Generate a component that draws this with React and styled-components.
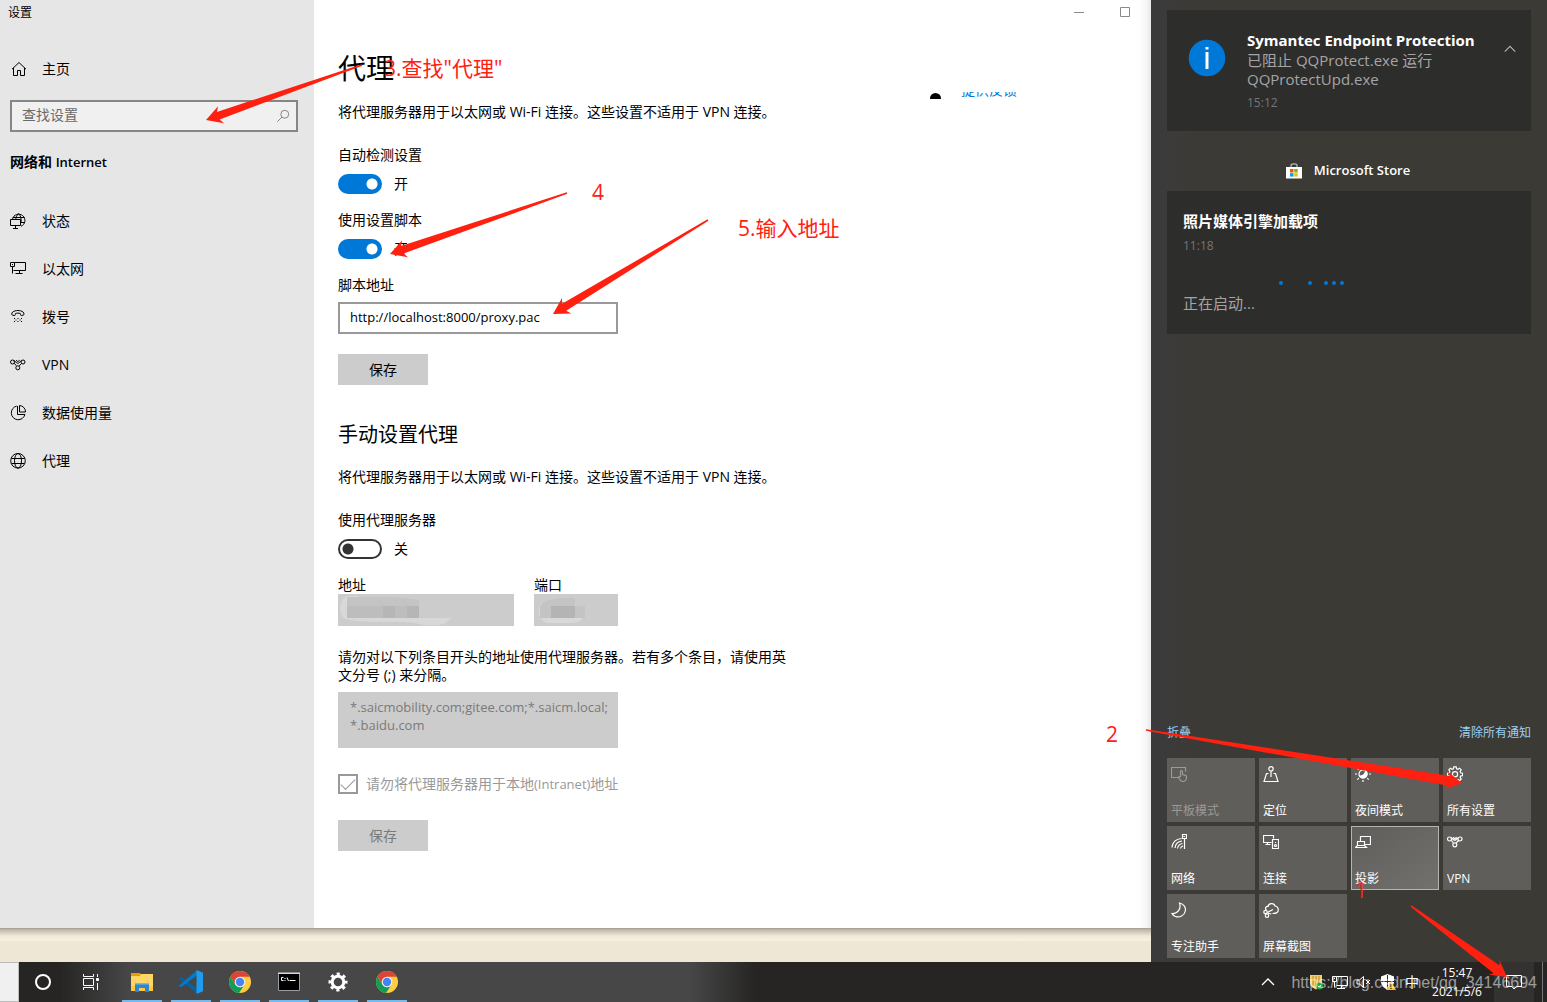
import React from 'react';
import styled, { createGlobalStyle, css } from 'styled-components';

const RED = '#ff2010';

const GlobalStyle = createGlobalStyle`
  *, *::before, *::after { box-sizing: border-box; }
  body {
    margin: 0;
    background: #eee7d5;
    color: #000;
    font-family: "Open Sans", "Noto Sans CJK SC", sans-serif;
    font-size: 14px;
    line-height: 20px;
  }
  h1, h2, h3, p { margin: 0; padding: 0; font-weight: 400; }
  button, input, textarea { font: inherit; color: inherit; margin: 0; border-radius: 0; }
  button { border: 0; padding: 0; background: none; text-align: inherit; }
  a { color: inherit; text-decoration: none; }
  svg { display: block; flex: none; }
`;

/* ---------- Icons ---------- */

const Line = styled.svg.attrs({ viewBox: '0 0 16 16' })`
  width: ${(p) => p.$size || 16}px;
  height: ${(p) => p.$size || 16}px;
  fill: none;
  stroke: currentColor;
  stroke-width: ${(p) => p.$weight || 1};
`;

const drawings = {
  home: (
    <path d="M1 8.200 8 1.500l7 6.700M2.500 7v7.500h4V9.500h3v5h4V7" />
  ),
  status: (
    <>
      <path d="M2.500 6A6.300 6.300 0 1 1 11 13.300M3 4.500h11.500M11 9.500h4M8.700.7C6.700 2 5.900 4 5.800 6.500M8.700.7c2.300 2.500 2.800 5.500 2.300 9" />
      <path d="M.5 6.500h10v6H.5zM5.500 12.500v3M3 15.500h5" />
    </>
  ),
  ethernet: (
    <path d="M4.500 1.500h11v8H3.500M.5 1.500h4v4h-4zM2.500 5.500v7M9.500 9.500v3M5.500 12.500h7M2 3.500h1" />
  ),
  dial: (
    <>
      <path d="M2.500 6.200c-1-.2-1.200-2 .2-3.200C5.500 1 10.500 1 13 3c1.400 1.200 1.200 3 .2 3.200l-2 .3c-.8 0-.7-1.700-.9-2C8.800 4 7 4 5.500 4.500c-.2.4 0 2-.9 2z" />
      <path d="M4 9.500h1M7.500 9.500h1M11 9.500h1M4 12.500h1M7.500 12.500h1M11 12.500h1M5.500 11h1M9.500 11h1" />
    </>
  ),
  vpn: (
    <>
      <circle cx="2.500" cy="5" r="2" />
      <circle cx="13" cy="5" r="2" />
      <circle cx="7.800" cy="10.800" r="2" />
      <path d="M4 3.500l2.300 2c1.200 1 2 1 3 0L11.500 3.500M4.300 6.300l2 2.400M11.500 6.500 9.200 8.900M6 3.200l1.800 1.500 1.900-1.500" />
    </>
  ),
  data: (
    <path d="M6.700 1.100A6.900 6.900 0 1 0 14.900 9.500H7.500V1M9.500.5v6.500h6A6.300 6.300 0 0 0 9.500.5z" />
  ),
  globe: (
    <>
      <circle cx="8" cy="7.800" r="7.300" />
      <ellipse cx="8" cy="7.800" rx="3.500" ry="7.300" />
      <path d="M1.500 5.500h13M1.500 10.500h13" />
    </>
  ),
  search: (
    <>
      <circle cx="10" cy="6" r="4.500" />
      <path d="M6.800 9.200 1.500 14.500" />
    </>
  ),
  tablet: (
    <>
      <path d="M7 11.500H.5v-10h14v4" />
      <path d="M9.500 10.500v-5c0-1.300 2-1.300 2 0v3l3 .8c1 .3 1 1 1 1.700 0 3-1 4.500-3.500 4.500-2 0-3.300-1.500-4.500-4 0-1 1.300-1.200 2-.3" />
    </>
  ),
  location: (
    <>
      <circle cx="8" cy="2.800" r="2.200" />
      <path d="M8 5v6M5.500 7.500h-2l-2.500 8h14l-2.500-8h-2" />
    </>
  ),
  night: (
    <>
      <circle cx="8" cy="8" r="4" />
      <path fill="currentColor" d="M10.500 4.800A4 4 0 1 1 4.600 10C8 10.500 10.500 8 10.500 4.800z" />
      <path d="M8 0v2M8 14v2M0 8h2M14 8h2M2.300 2.300l1.500 1.500M12.200 12.200l1.500 1.500M2.300 13.700l1.500-1.500M12.200 3.800l1.500-1.500" />
    </>
  ),
  gear: (
    <>
      <path d="M6.800.8h2.400l.4 2 1.300.5 1.700-1.100 1.600 1.600-1.100 1.700.5 1.300 2 .4v2.400l-2 .4-.5 1.200 1.100 1.700-1.600 1.700-1.700-1.100-1.300.5-.4 2H6.800l-.4-2-1.300-.5-1.700 1.100-1.600-1.700 1.100-1.700L2.400 10l-2-.4V7.200l2-.4.5-1.300-1.100-1.700 1.600-1.600 1.700 1.100 1.300-.5z" />
      <circle cx="8" cy="8.300" r="2.600" />
    </>
  ),
  network: (
    <>
      <path d="M11.500.5h4v4h-4zM13.500 4.500V15M12.500 2.500h2" />
      <path d="M1 13.500C1.500 8.500 5 5 10.500 4.500M4 14c.4-4 3-6.500 7-7M6.500 14.500c.4-3 2-4.500 5-5M9.500 14.500c.2-1.300 1-2.200 2.500-2.500" />
    </>
  ),
  connect: (
    <>
      <path d="M8.500 8.500h-8v-7h10v3M4.500 8.500v2M2.500 10.500h5" />
      <path d="M9.500 5.500h6v9h-6zM12 8.500h1" />
      <circle cx="12.500" cy="11.500" r="1" />
    </>
  ),
  project: (
    <path d="M5.500 7.500v-5h10v8H10M2.500 7.500h7v4h-7zM2.500 11.500l-2 2h11l-2-2" />
  ),
  moon: (
    <path d="M8.500 1C13 2 15 5.500 14.300 9 13.500 13.500 8.500 16 4.500 14.500 3 14 1.500 12.700 1 11.500 6.500 12 10.500 7 8.500 1z" />
  ),
  snip: (
    <>
      <path d="M3.500 8C1.500 6.500 3 4 5 4.500 5.500 1 11 .5 12 4c3 0 4.500 4.500 2 6.500-1 1-3 1-4.500 1M4.300 10.500 10 7.500M4.300 11l4 1" />
      <circle cx="2.500" cy="10" r="1.700" />
      <circle cx="4" cy="13.700" r="1.700" />
    </>
  ),
  taskview: (
    <>
      <path d="M.5 0v2.500h10V0M.5 16v-2.500h10V16M.5 4.500h10v7H.5zM14.500 0v3M14.500 9v7" />
      <path fill="currentColor" d="M13.500 4.500h2v2h-2z" />
    </>
  ),
  chevron: <path d="M2 11l6-6 6 6" />,
  monitor: (
    <path d="M4.500 2.500h11v9h-11M.5 2.500h4v5h-4zM2.500 7.500v6M9.500 11.500v3M5 14.500h8M2 4.500h1" />
  ),
  mute: <path d="M1 6h2.500L7.500 2.500v11L3.500 10H1zM10 6l4 4M14 6l-4 4" />,
  message: <path d="M.5 1.500h15v11h-5l-2.500 2.500-2-2.500H.5z" />,
};

const Icon = ({ name, size, weight }) => (
  <Line $size={size} $weight={weight} aria-hidden="true">{drawings[name]}</Line>
);

const Art = styled.svg`
  width: ${(p) => p.$size || 24}px;
  height: ${(p) => p.$size || 24}px;
`;

const FolderArt = () => (
  <Art viewBox="0 0 24 24">
    <path fill="#ffd665" d="M1 4h22v17H1z" />
    <path fill="#e5a000" d="M1 3h9l1 1.500L9.500 6H1z" />
    <path fill="#ffc83d" d="M1 16h22v5H1z" />
    <path fill="#2f86cf" d="M5 13h14v9h-4v-4H9v4H5z" />
    <path fill="#6fb9ee" d="M5 13h14v1.500H5z" />
  </Art>
);

const CodeArt = () => (
  <Art viewBox="0 0 24 24">
    <path fill="#0065a9" d="M0 8.500 2 6.800l16 12v4.700z" />
    <path fill="#007acc" d="M0 15.500l2 1.700L18 5.500V.5z" />
    <path fill="#1f9cf0" d="M17.500 0 24 2.800v18.400L17.500 24z" />
  </Art>
);

const ChromeArt = () => (
  <Art viewBox="0 0 24 24">
    <circle cx="12" cy="12" r="11" fill="#ffcd40" />
    <path fill="#db4437" d="M2.500 6.500A11 11 0 0 1 21.600 6.700H12L7.300 14.700z" />
    <path fill="#0f9d58" d="M2.500 6.500 7.400 14.700 12 17.300l3.500-1L11 23A11 11 0 0 1 2.500 6.500z" />
    <circle cx="12" cy="12" r="5.300" fill="#f1f1f1" />
    <circle cx="12" cy="12" r="4.200" fill="#4285f4" />
  </Art>
);

const TerminalArt = () => (
  <Art viewBox="0 0 24 24">
    <path fill="#000" stroke="#9a9fa5" d="M1.500 3.500h21v17h-21z" />
    <path fill="#d6dade" d="M1 2.500h22V4H1z" />
    <path stroke="#fff" fill="none" d="M6.500 7.500H4.500v3h2M8 8v1M8 10v1M10 7.500l1.500 3.500M12.500 10.500h6" />
  </Art>
);

const GearArt = () => (
  <Art viewBox="0 0 24 24">
    <circle cx="12" cy="12" r="5.800" fill="none" stroke="#fff" strokeWidth="3" />
    <circle cx="12" cy="12" r="8" fill="none" stroke="#fff" strokeWidth="3" strokeDasharray="3.140 3.140" strokeDashoffset="1.570" />
  </Art>
);

const StoreArt = () => (
  <Art viewBox="0 0 16 16" $size={16}>
    <path fill="none" stroke="#bbb" strokeWidth="1.200" d="M5 4V2.500C5 .3 11 .3 11 2.500V4" />
    <path fill="#fff" d="M0 4h16v11.500H0z" />
    <path fill="#f25022" d="M4 6h3.500v3.500H4z" />
    <path fill="#7fba00" d="M8.200 6h3.500v3.500H8.200z" />
    <path fill="#00a4ef" d="M4 10.100h3.500v3.500H4z" />
    <path fill="#ffb900" d="M8.200 10.100h3.500v3.500H8.200z" />
  </Art>
);

const ShieldArt = () => (
  <Art viewBox="0 0 16 16" $size={16}>
    <path fill="#f3cf6c" d="M2 1h12v8c0 3-3 5-6 6.500C5 14 2 12 2 9z" />
    <path stroke="#b7852a" fill="none" d="M5 2v9M8 2v11M11 2v8" />
    <circle cx="11.500" cy="12" r="3.500" fill="#1ea838" />
    <path stroke="#fff" fill="none" d="M10 12l1.200 1.200 2-2.400" />
  </Art>
);

const DefenderArt = () => (
  <Art viewBox="0 0 16 16" $size={16}>
    <path fill="#fff" d="M7.500 0 14 2.500v5c0 4-3.500 6.500-6.500 8C4 14 1 11.500 1 7.500v-5z" />
    <path stroke="#262524" fill="none" d="M7.500 1v14M1 7.500h13" />
    <path fill="#fbc02d" d="M11 7l5 9H6z" />
    <path stroke="#000" fill="none" d="M11 10v3M11 14v1" />
  </Art>
);

/* ---------- Shell ---------- */

const Desktop = styled.div`
  position: relative;
  display: grid;
  grid-template-rows: 1fr 40px;
  min-height: 100vh;
`;

const Workspace = styled.div`
  display: grid;
  grid-template-columns: minmax(0, 1fr) 396px;
`;

const DesktopArea = styled.div`
  display: flex;
  flex-direction: column;
  padding-bottom: 34px;
  background: linear-gradient(to top, #eee7d5 21px, #faf2e0 21px, #f1e9d7 26px, #b9b2a3 33px, #96938b 34px);
`;

const Window = styled.div`
  flex: 1;
  display: grid;
  grid-template-columns: 314px minmax(0, 1fr);
  background: #fff;
`;

const Sidebar = styled.aside`
  background: #e6e6e6;
`;

const WindowTitle = styled.div`
  height: 24px;
  padding: 3px 8px 0;
  font-size: 12px;
  line-height: 20px;
`;

const NavLink = styled.a`
  display: flex;
  align-items: center;
  gap: ${(p) => (p.$home ? 15 : 16)}px;
  height: 48px;
  padding-left: ${(p) => (p.$home ? 11 : 10)}px;
  ${(p) => p.$home && css`margin-top: 21px;`}
`;

const SearchBox = styled.div`
  display: flex;
  align-items: center;
  height: 32px;
  margin: 7px 16px 20px 10px;
  padding: 0 6px 0 10px;
  border: 2px solid #868686;
  background: #f0f0f0;
  color: #767676;
`;

const SearchInput = styled.input`
  flex: 1;
  min-width: 0;
  padding: 0 0 2px;
  border: 0;
  background: none;
  outline: 0;
  &::placeholder { color: #6a6a6a; opacity: 1; }
`;

const Category = styled.h2`
  padding: 0 10px;
  margin-bottom: 25px;
  font-size: 14px;
  font-weight: 600;
  line-height: 20px;
`;

const Pane = styled.main`
  background: linear-gradient(to left, #e9e9e9, #f6f6f6 5px, #fdfdfd 11px, #fff 14px);
`;

const Caption = styled.div`
  display: flex;
  justify-content: flex-end;
  height: 24px;
  padding-right: 3px;
  color: #8a8a8a;
`;

const CaptionButton = styled.button`
  display: grid;
  place-items: center;
  width: 46px;
`;

const CaptionGlyph = styled.svg`
  width: 10px;
  height: 10px;
  fill: none;
  stroke: currentColor;
`;

const Columns = styled.div`
  display: flex;
  gap: 142px;
  padding: 24px;
`;

const Settings = styled.div`
  width: 450px;
`;

const PageTitle = styled.h1`
  margin-bottom: 14px;
  font-size: 28px;
  line-height: 40px;
`;

const Section = styled.h2`
  margin: 36px 0 18px;
  font-size: 20px;
  line-height: 28px;
`;

const Note = styled.p`
  line-height: 20px;
`;

const LabelNote = styled.label`
  display: block;
  line-height: 18px;
`;

const Small = styled.span`
  font-size: 13px;
`;

const Field = styled.div`
  display: flex;
  flex-direction: column;
  gap: ${(p) => p.$gap}px;
  margin-top: ${(p) => p.$top || 0}px;
`;

const FieldLabel = styled.label`
  line-height: ${(p) => p.$line || 20}px;
`;

const ToggleRow = styled.label`
  display: flex;
  align-items: center;
  gap: 12px;
`;

const Switch = styled.input`
  appearance: none;
  width: 44px;
  height: 20px;
  border: 2px solid #333;
  border-radius: 10px;
  background: radial-gradient(circle at 8px 8px, #333 5px, transparent 6px);
  &:checked {
    border-color: #0078d7;
    background: radial-gradient(circle at 32px 8px, #fff 5px, #0078d7 6px);
  }
`;

const TextInput = styled.input`
  width: 280px;
  height: 32px;
  padding: 0 10px 2px;
  border: 2px solid #999;
  background: #fff;
  font-size: 13px;
`;

const SaveButton = styled.button`
  display: block;
  width: 90px;
  height: 31px;
  margin-top: ${(p) => p.$top}px;
  background: #ccc;
  text-align: center;
  &:disabled { color: #7a7a7a; }
`;

const AddressRow = styled.div`
  display: flex;
  gap: 20px;
  margin: 17px 0 22px;
`;

const Masked = styled.div`
  position: relative;
  width: ${(p) => p.$width}px;
  height: 32px;
  background: #ccc;
`;

const MaskedInput = styled.input`
  width: 100%;
  height: 100%;
  padding: 0 10px;
  border: 0;
  background: none;
`;

const Smudge = styled.svg`
  position: absolute;
  inset: 0;
  width: 100%;
  height: 100%;
`;

const Bypass = styled.textarea`
  display: block;
  width: 280px;
  height: 56px;
  margin: 8px 0 26px;
  padding: 6px 8px 6px 12px;
  border: 0;
  background: #ccc;
  color: #7a7a7a;
  font-size: 13px;
  line-height: 18px;
  resize: none;
  overflow: hidden;
`;

const CheckRow = styled.label`
  display: flex;
  align-items: center;
  gap: 8px;
  height: 20px;
  color: #999;
`;

const Check = styled.input`
  appearance: none;
  display: grid;
  width: 20px;
  height: 20px;
  border: 2px solid #999;
  &::before {
    content: "";
    width: 14px;
    height: 7px;
    margin: 3px 1px;
    border: solid #999;
    border-width: 0 0 1px 1px;
    transform: rotate(-45deg);
  }
`;

const Feedback = styled.div`
  display: flex;
  gap: 20px;
  margin-top: 44px;
  height: 7px;
  overflow: hidden;
  color: #0078d7;
`;

const FeedbackBullet = styled.span`
  width: 11px;
  height: 11px;
  margin-top: 1px;
  border-radius: 50%;
  background: #000;
`;

const FeedbackClip = styled.a`
  display: flex;
  align-items: flex-end;
  height: 5px;
  overflow: hidden;
  line-height: 14px;
`;

/* ---------- Action centre ---------- */

const ActionCenter = styled.aside`
  display: flex;
  flex-direction: column;
  padding: 10px 16px 4px;
  background: linear-gradient(to right, #3b3b3c, #3b3a36 50px, #3b3a35);
  color: #fff;
`;

const Card = styled.article`
  display: flex;
  gap: 21px;
  background: #2d2d2c;
  padding: ${(p) => (p.$stacked ? '20px 16px 21px' : '20px 14px 19px 21px')};
  ${(p) => p.$stacked && css`
    flex-direction: column;
    gap: 0;
  `}
`;

const InfoBadge = styled.svg`
  width: 38px;
  height: 38px;
  margin-top: 9px;
`;

const CardBody = styled.div`
  flex: 1;
  min-width: 0;
`;

const CardTitle = styled.h3`
  font-size: 15px;
  font-weight: 700;
  line-height: 21px;
  white-space: nowrap;
`;

const CardText = styled.p`
  color: #a5a5a5;
  font-size: 15px;
  line-height: 19px;
`;

const CardTime = styled.time`
  display: block;
  margin-top: 4px;
  color: #767676;
  font-size: 12px;
  line-height: 19px;
`;

const Collapse = styled.button`
  align-self: flex-start;
  margin-top: 12px;
  color: #b4b4b4;
`;

const GroupTitle = styled.h3`
  display: flex;
  align-items: center;
  justify-content: center;
  gap: 12px;
  padding: 29px 2px 10px 0;
  font-size: 13px;
  font-weight: 600;
  line-height: 21px;
`;

const Progress = styled.svg`
  width: 100%;
  height: 4px;
  margin: 26px 0 9px;
  fill: #0078d7;
`;

const PanelLinks = styled.div`
  display: flex;
  justify-content: space-between;
  margin: auto 0 15px;
  color: #9cd1f7;
  font-size: 12px;
`;

const Tiles = styled.div`
  display: grid;
  grid-template-columns: repeat(4, 1fr);
  grid-auto-rows: 64px;
  gap: 4px;
`;

const Tile = styled.button`
  display: flex;
  flex-direction: column;
  justify-content: space-between;
  padding: 8px 4px 1px;
  background: #5f5e5b;
  color: #fff;
  font-size: 12px;
  line-height: 20px;
  &:disabled { color: #9b9a98; }
  ${(p) => p.$active && css`
    background: linear-gradient(to bottom right, #5f5e5b, #72716d);
    box-shadow: inset 0 0 0 1px #b4b4b1;
  `}
`;

/* ---------- Taskbar ---------- */

const Taskbar = styled.footer`
  display: flex;
  justify-content: space-between;
  background: linear-gradient(to right, #262524 60px, #474747 130px, #474747 690px, #262524 755px);
  color: #fff;
`;

const TaskGroup = styled.div`
  display: flex;
`;

const SearchStub = styled.div`
  width: 19px;
  background: #f0f0f0;
  border: solid #bcbcbc;
  border-width: 1px 1px 1px 0;
`;

const TaskButton = styled.button`
  display: grid;
  place-items: center;
  width: 48px;
`;

const AppList = styled.div`
  display: flex;
  gap: 9px;
  margin-left: 7px;
`;

const AppButton = styled.button`
  display: grid;
  place-items: center;
  width: 40px;
  border-top: 2px solid transparent;
  border-bottom: 2px solid #76b9ed;
`;

const Ring = styled.span`
  width: 16px;
  height: 16px;
  border: 2px solid #fff;
  border-radius: 50%;
`;

const Tray = styled.div`
  display: flex;
  align-items: center;
  gap: 8px;
  padding-right: 4px;
`;

const TrayButton = styled.button`
  display: grid;
  place-items: center;
  width: 16px;
  ${(p) => p.$wide && css`
    width: 32px;
    margin-right: 16px;
  `}
`;

const Clock = styled.time`
  width: 58px;
  font-size: 12px;
  line-height: 19px;
  text-align: center;
`;

const Notifications = styled.button`
  display: grid;
  place-items: center;
  align-self: stretch;
  width: 40px;
  background: #333231;
`;

const PeekEdge = styled.span`
  align-self: stretch;
  width: 1px;
  background: #777;
`;

/* ---------- Annotations ---------- */

const Overlay = styled.div`
  position: absolute;
  inset: 0;
  overflow: hidden;
  pointer-events: none;
`;

const ArrowLayer = styled.svg`
  position: absolute;
  top: 0;
  left: 0;
  fill: ${RED};
`;

const Callout = styled.span`
  position: absolute;
  left: ${(p) => p.$x}px;
  top: ${(p) => p.$y}px;
  color: ${RED};
  font-size: 21px;
  line-height: 28px;
  white-space: nowrap;
`;

const Watermark = styled.span`
  position: absolute;
  right: 10px;
  bottom: 9px;
  color: rgba(255, 255, 255, 0.55);
  font-family: "Liberation Sans", sans-serif;
  font-size: 16px;
  line-height: 20px;
`;

/* Tapered arrow: thin at the tail, widening up to a barbed head. */
const Arrow = ({ from, to, neck = 4 }) => {
  const [x1, y1] = from;
  const [x2, y2] = to;
  const length = Math.hypot(x2 - x1, y2 - y1);
  const ux = (x2 - x1) / length;
  const uy = (y2 - y1) / length;
  const at = (back, side) => `${x2 - ux * back - uy * side},${y2 - uy * back + ux * side}`;
  const points = [
    at(length, 0.8), at(13, neck), at(16, 9), at(0, 0),
    at(16, -9), at(13, -neck), at(length, -0.8),
  ];
  return <polygon points={points.join(' ')} />;
};

const arrows = [
  { from: [362, 65], to: [206, 120] },
  { from: [567, 193], to: [390, 254] },
  { from: [708, 220], to: [553, 314] },
  { from: [1146, 730], to: [1462, 783], neck: 5 },
  { from: [1411, 906], to: [1507, 977], neck: 5 },
];

const navItems = [
  ['status', '状态'],
  ['ethernet', '以太网'],
  ['dial', '拨号'],
  ['vpn', 'VPN'],
  ['data', '数据使用量'],
  ['globe', '代理'],
];

const tiles = [
  ['tablet', '平板模式', 'off'],
  ['location', '定位'],
  ['night', '夜间模式'],
  ['gear', '所有设置'],
  ['network', '网络'],
  ['connect', '连接'],
  ['project', '投影', 'active'],
  ['vpn', 'VPN'],
  ['moon', '专注助手'],
  ['snip', '屏幕截图'],
];

const apps = [
  ['文件资源管理器', FolderArt],
  ['Visual Studio Code', CodeArt],
  ['Google Chrome', ChromeArt],
  ['命令提示符', TerminalArt],
  ['设置', GearArt],
  ['Google Chrome 2', ChromeArt],
];

const ProxyNote = () => (
  <Note>将代理服务器用于以太网或 Wi-Fi 连接。这些设置不适用于 VPN 连接。</Note>
);

const Toggle = ({ id, label, on, top }) => (
  <Field $gap={9} $top={top}>
    <FieldLabel htmlFor={id}>{label}</FieldLabel>
    <ToggleRow>
      <Switch id={id} type="checkbox" role="switch" defaultChecked={on} />
      {on ? '开' : '关'}
    </ToggleRow>
  </Field>
);

export default function App() {
  return (
    <Desktop>
      <GlobalStyle />
      <Workspace>
        <DesktopArea>
          <Window>
            <Sidebar>
              <WindowTitle>设置</WindowTitle>
              <NavLink href="#home" $home><Icon name="home" />主页</NavLink>
              <SearchBox>
                <SearchInput type="search" aria-label="查找设置" placeholder="查找设置" />
                <Icon name="search" size={14} />
              </SearchBox>
              <Category>网络和 <Small>Internet</Small></Category>
              <nav>
                {navItems.map(([icon, text]) => (
                  <NavLink key={icon} href={`#${icon}`}><Icon name={icon} />{text}</NavLink>
                ))}
              </nav>
            </Sidebar>
            <Pane>
              <Caption>
                <CaptionButton aria-label="最小化">
                  <CaptionGlyph viewBox="0 0 10 10"><path d="M0 5.500h10" /></CaptionGlyph>
                </CaptionButton>
                <CaptionButton aria-label="最大化">
                  <CaptionGlyph viewBox="0 0 10 10"><path d="M.5.5h9v9h-9z" /></CaptionGlyph>
                </CaptionButton>
              </Caption>
              <Columns>
                <Settings>
                  <PageTitle>代理</PageTitle>
                  <ProxyNote />
                  <Toggle id="auto" label="自动检测设置" on top={23} />
                  <Toggle id="script" label="使用设置脚本" on top={16} />
                  <Field $gap={7} $top={16}>
                    <FieldLabel htmlFor="pac">脚本地址</FieldLabel>
                    <TextInput id="pac" defaultValue="http://localhost:8000/proxy.pac" />
                  </Field>
                  <SaveButton $top={20}>保存</SaveButton>

                  <Section>手动设置代理</Section>
                  <ProxyNote />
                  <Toggle id="manual" label="使用代理服务器" top={23} />
                  <AddressRow>
                    <Field $gap={0}>
                      <FieldLabel htmlFor="address" $line={18}>地址</FieldLabel>
                      <Masked $width={176}>
                        <MaskedInput id="address" disabled />
                        <Smudge viewBox="0 0 176 32">
                          <path fill="#d8d8d8" d="M9 2C0 7 0 20 7 25c20 5 50 1 70 4 15 4 30 4 36-5H20V2z" />
                          <path fill="#c4c4c4" d="M9 3h45l27 3v18H9z" />
                          <path fill="#bdbdbd" d="M9 12h72v12H9z" />
                          <path fill="#b6b6b6" d="M45 12h12v12H45zM69 12h12v12H69z" />
                        </Smudge>
                      </Masked>
                    </Field>
                    <Field $gap={0}>
                      <FieldLabel htmlFor="port" $line={18}>端口</FieldLabel>
                      <Masked $width={84}>
                        <MaskedInput id="port" disabled />
                        <Smudge viewBox="0 0 84 32">
                          <path fill="#d8d8d8" d="M8 9C2 14 4 27 14 29h22c7 0 11-2 13-5H17z" />
                          <path fill="#c4c4c4" d="M6 12c5-6 14-8 24-8h11v8h10v12H6z" />
                          <path fill="#b4b4b4" d="M17 12h24v12H17z" />
                        </Smudge>
                      </Masked>
                    </Field>
                  </AddressRow>
                  <LabelNote htmlFor="bypass">
                    请勿对以下列条目开头的地址使用代理服务器。若有多个条目，请使用英文分号 (;) 来分隔。
                  </LabelNote>
                  <Bypass id="bypass" disabled defaultValue={'*.saicmobility.com;gitee.com;*.saicm.local;\n*.baidu.com'} />
                  <CheckRow>
                    <Check type="checkbox" defaultChecked disabled />
                    <span>请勿将代理服务器用于本地<Small>(Intranet)</Small>地址</span>
                  </CheckRow>
                  <SaveButton $top={26} disabled>保存</SaveButton>
                </Settings>
                <Feedback>
                  <FeedbackBullet />
                  <FeedbackClip href="#feedback">提供反馈</FeedbackClip>
                </Feedback>
              </Columns>
            </Pane>
          </Window>
        </DesktopArea>

        <ActionCenter>
          <Card>
            <InfoBadge viewBox="0 0 38 38">
              <circle cx="19" cy="19" r="18.300" fill="#0078d7" />
              <path fill="#fff" d="M17.500 13h3v17h-3zM17.500 8h3v2.500h-3z" />
            </InfoBadge>
            <CardBody>
              <CardTitle>Symantec Endpoint Protection</CardTitle>
              <CardText>已阻止 QQProtect.exe 运行 QQProtectUpd.exe</CardText>
              <CardTime>15:12</CardTime>
            </CardBody>
            <Collapse aria-label="收起"><Icon name="chevron" size={14} weight={1.25} /></Collapse>
          </Card>
          <GroupTitle><StoreArt />Microsoft Store</GroupTitle>
          <Card $stacked>
            <CardTitle>照片媒体引擎加载项</CardTitle>
            <CardTime>11:18</CardTime>
            <Progress viewBox="0 0 332 4">
              {[98, 127, 143, 151, 159].map((x) => <circle key={x} cx={x} cy="2" r="2" />)}
            </Progress>
            <CardText>正在启动...</CardText>
          </Card>
          <PanelLinks>
            <a href="#collapse">折叠</a>
            <a href="#clear">清除所有通知</a>
          </PanelLinks>
          <Tiles>
            {tiles.map(([icon, text, state]) => (
              <Tile key={icon} disabled={state === 'off'} $active={state === 'active'}>
                <Icon name={icon} weight={1.2} />
                {text}
              </Tile>
            ))}
          </Tiles>
        </ActionCenter>
      </Workspace>

      <Taskbar>
        <TaskGroup>
          <SearchStub />
          <TaskButton aria-label="Cortana"><Ring /></TaskButton>
          <TaskButton aria-label="任务视图"><Icon name="taskview" /></TaskButton>
          <AppList>
            {apps.map(([name, AppArt]) => (
              <AppButton key={name} aria-label={name}><AppArt /></AppButton>
            ))}
          </AppList>
        </TaskGroup>
        <Tray>
          <TrayButton $wide aria-label="显示隐藏的图标"><Icon name="chevron" weight={1.25} /></TrayButton>
          <TrayButton aria-label="安全"><ShieldArt /></TrayButton>
          <TrayButton aria-label="网络"><Icon name="monitor" /></TrayButton>
          <TrayButton aria-label="音量"><Icon name="mute" /></TrayButton>
          <TrayButton aria-label="防护"><DefenderArt /></TrayButton>
          <TrayButton>中</TrayButton>
          <Clock>15:47<br />2021/5/6</Clock>
          <Notifications aria-label="通知"><Icon name="message" /></Notifications>
          <PeekEdge />
        </Tray>
      </Taskbar>

      <Overlay>
        <Watermark>https://blog.csdn.net/qq_34146694</Watermark>
        <ArrowLayer width="1547" height="1002" viewBox="0 0 1547 1002">
          {arrows.map((arrow) => <Arrow key={arrow.to.join()} {...arrow} />)}
        </ArrowLayer>
        <Callout $x={384} $y={54}>3.查找"代理"</Callout>
        <Callout $x={592} $y={178}>4</Callout>
        <Callout $x={738} $y={214}>5.输入地址</Callout>
        <Callout $x={1106} $y={720}>2</Callout>
        <Callout $x={1355} $y={876}>1</Callout>
      </Overlay>
    </Desktop>
  );
}
